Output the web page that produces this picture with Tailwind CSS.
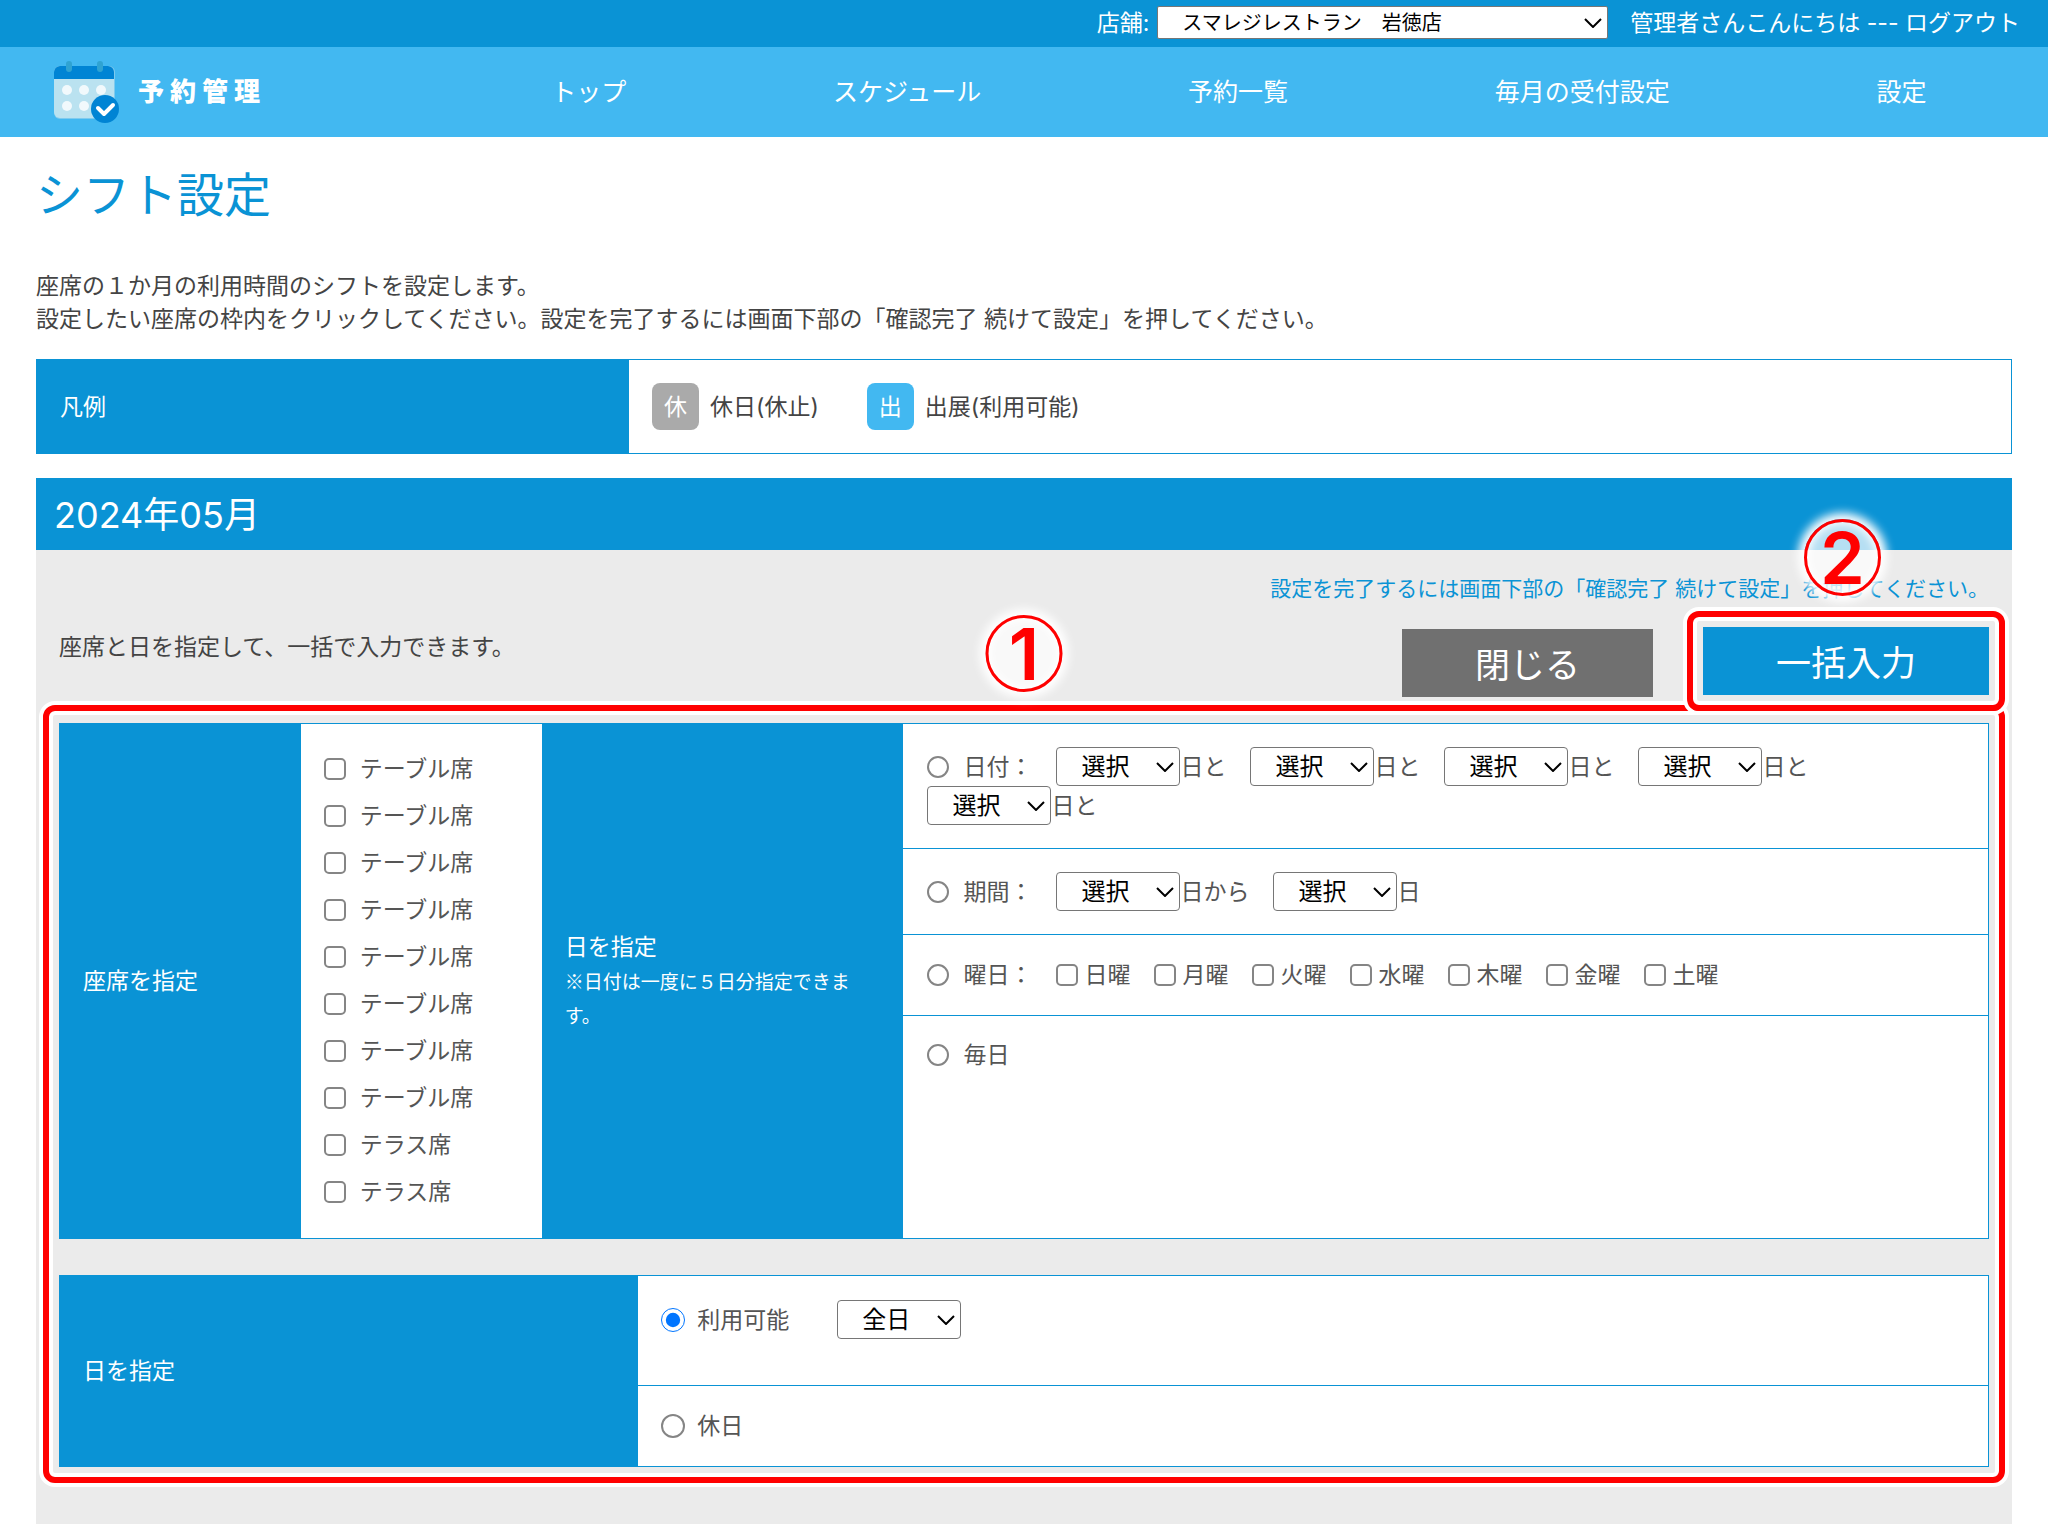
<!DOCTYPE html>
<html lang="ja">
  <head>
    <meta charset="UTF-8" />
    <title>シフト設定 | 予約管理</title>
    <meta name="viewport" content="width=device-width, initial-scale=1.0" />
    <script src="https://cdn.jsdelivr.net/npm/@tailwindcss/browser@4"></script>
  </head>
  <body
    class="flex min-h-screen flex-col bg-white font-['Inter','Noto_Sans_CJK_JP',sans-serif] text-[23px] leading-[34px] text-[#444]"
  >
    <svg class="hidden" xmlns="http://www.w3.org/2000/svg">
      <symbol id="chevron" viewBox="0 0 18 10">
        <path d="M1 1 9 9 17 1" fill="none" stroke="#000" stroke-width="2" />
      </symbol>
    </svg>

    <header class="text-white">
      <div class="flex h-[47px] items-center justify-end bg-[#0a93d5] pr-7 pb-0.5">
        <label for="shop">店舗:</label>
        <span class="relative mr-[22px] ml-2 flex items-center">
          <select
            id="shop"
            class="h-[33px] w-[451px] appearance-none rounded-xs border border-[#767676] bg-white px-6 text-xl leading-7 text-black"
          >
            <option>スマレジレストラン　岩徳店</option>
          </select>
          <svg class="pointer-events-none absolute right-1.5 h-2.5 w-[18px]"><use href="#chevron" /></svg>
        </span>
        <span>管理者さんこんにちは --- <a href="#logout">ログアウト</a></span>
      </div>
      <div class="flex h-[90px] items-center bg-[#42b8f1] pr-[18px]">
        <a href="#top" class="flex w-[448px] items-center gap-[18px] pl-[54px]">
          <svg class="h-[64px] w-[66px]" viewBox="0 0 66 64" xmlns="http://www.w3.org/2000/svg">
            <rect x="0" y="6" width="61" height="53" rx="6" fill="#7ecbef" />
            <rect x="0" y="6" width="60" height="52" rx="6" fill="#bae2f0" />
            <path d="M0 19v-7a6 6 0 0 1 6-6h48a6 6 0 0 1 6 6v7z" fill="#0084d4" />
            <rect x="12" y="1" width="6" height="11" rx="3" fill="#2fa3d2" />
            <rect x="43" y="1" width="6" height="11" rx="3" fill="#2fa3d2" />
            <g fill="#f1f9fc">
              <circle cx="13" cy="30" r="5" />
              <circle cx="30" cy="30" r="5" />
              <circle cx="47" cy="30" r="5" />
              <circle cx="13" cy="46" r="5" />
              <circle cx="30" cy="46" r="5" />
            </g>
            <circle cx="51" cy="49" r="14" fill="#0084d4" />
            <path
              d="m44 48 6 6 9-9"
              fill="none"
              stroke="#fff"
              stroke-width="4"
              stroke-linecap="round"
              stroke-linejoin="round"
            />
          </svg>
          <span class="text-[26px] font-black tracking-[6px]">予約管理</span>
        </a>
        <nav class="flex flex-1 justify-around text-[25px]">
          <a href="#top">トップ</a>
          <a href="#schedule">スケジュール</a>
          <a href="#list">予約一覧</a>
          <a href="#monthly">毎月の受付設定</a>
          <a href="#settings">設定</a>
        </nav>
      </div>
    </header>

    <main class="flex flex-1 flex-col px-9 pt-7">
      <h1 class="text-[47px] leading-[60px] text-[#0a93d5]">シフト設定</h1>
      <p class="mt-[45px] leading-[33px]">
        座席の１か月の利用時間のシフトを設定します。<br />
        設定したい座席の枠内をクリックしてください。設定を完了するには画面下部の「確認完了 続けて設定」を押してください。
      </p>

      <table class="mt-[23px] w-full border border-[#0a93d5]">
        <tbody>
          <tr>
            <th scope="row" class="w-[30%] bg-[#0a93d5] px-[23px] text-left font-normal text-white">凡例</th>
            <td class="px-[23px] py-[23px]">
              <div class="flex items-center">
                <span class="flex size-[47px] items-center justify-center rounded-lg bg-[#aaa] text-white">休</span>
                <span class="mr-12 ml-[11px]">休日(休止)</span>
                <span class="flex size-[47px] items-center justify-center rounded-lg bg-[#42b8f1] text-white">出</span>
                <span class="ml-[11px]">出展(利用可能)</span>
              </div>
            </td>
          </tr>
        </tbody>
      </table>

      <h2 class="mt-6 bg-[#0a93d5] px-[18px] pt-0.5 text-4xl leading-[70px] text-white">2024年05月</h2>

      <section class="relative flex-1 bg-[#ebebeb] px-[23px] pt-[22px] pb-14">
        <p class="text-right text-[21px] text-[#0a93d5]">
          設定を完了するには画面下部の「確認完了 続けて設定」を押してください。
        </p>

        <div class="mt-[21px] flex h-[70px]">
          <p class="flex-1 leading-10">座席と日を指定して、一括で入力できます。</p>
          <button type="button" class="mr-[50px] h-[68px] self-end bg-[#707070] px-[73px] pt-1 text-[35px] text-white">
            閉じる
          </button>
          <div class="relative z-10 h-[68px]">
            <button type="button" class="h-full bg-[#0a93d5] px-[73px] pt-1 text-[35px] text-white">一括入力</button>
            <div
              class="pointer-events-none absolute -inset-4 rounded-xl border-6 border-[#f00] shadow-[0_0_0_4px_#fff,inset_0_0_0_4px_#fff]"
            ></div>
            <!-- step 2 -->
            <span
              class="pointer-events-none absolute -top-[108px] right-27 flex size-[77px] items-center justify-center rounded-full border-3 border-[#f00] bg-white/70 text-[72px] leading-none font-semibold text-[#f00] shadow-[0_0_10px_6px_#fff,inset_0_0_8px_2px_#fff]"
              >2</span
            >
          </div>
        </div>

        <div class="relative mt-[26px] text-[#555]">
          <table class="w-full table-fixed border border-[#0a93d5] bg-white">
            <tbody>
              <tr>
                <th scope="row" class="w-1/8 bg-[#0a93d5] px-[23px] text-left font-normal text-white">座席を指定</th>
                <td class="w-1/8 px-[23px] pt-[21px] pb-[23px]">
                  <label class="flex h-[47px] items-center gap-3.5"><input type="checkbox" class="size-[22px] appearance-none rounded-[5px] border-2 border-[#858585] checked:appearance-auto" />テーブル席</label>
                  <label class="flex h-[47px] items-center gap-3.5"><input type="checkbox" class="size-[22px] appearance-none rounded-[5px] border-2 border-[#858585] checked:appearance-auto" />テーブル席</label>
                  <label class="flex h-[47px] items-center gap-3.5"><input type="checkbox" class="size-[22px] appearance-none rounded-[5px] border-2 border-[#858585] checked:appearance-auto" />テーブル席</label>
                  <label class="flex h-[47px] items-center gap-3.5"><input type="checkbox" class="size-[22px] appearance-none rounded-[5px] border-2 border-[#858585] checked:appearance-auto" />テーブル席</label>
                  <label class="flex h-[47px] items-center gap-3.5"><input type="checkbox" class="size-[22px] appearance-none rounded-[5px] border-2 border-[#858585] checked:appearance-auto" />テーブル席</label>
                  <label class="flex h-[47px] items-center gap-3.5"><input type="checkbox" class="size-[22px] appearance-none rounded-[5px] border-2 border-[#858585] checked:appearance-auto" />テーブル席</label>
                  <label class="flex h-[47px] items-center gap-3.5"><input type="checkbox" class="size-[22px] appearance-none rounded-[5px] border-2 border-[#858585] checked:appearance-auto" />テーブル席</label>
                  <label class="flex h-[47px] items-center gap-3.5"><input type="checkbox" class="size-[22px] appearance-none rounded-[5px] border-2 border-[#858585] checked:appearance-auto" />テーブル席</label>
                  <label class="flex h-[47px] items-center gap-3.5"><input type="checkbox" class="size-[22px] appearance-none rounded-[5px] border-2 border-[#858585] checked:appearance-auto" />テラス席</label>
                  <label class="flex h-[47px] items-center gap-3.5"><input type="checkbox" class="size-[22px] appearance-none rounded-[5px] border-2 border-[#858585] checked:appearance-auto" />テラス席</label>
                </td>
                <th scope="row" class="w-3/16 bg-[#0a93d5] px-[23px] text-left font-normal text-white">
                  日を指定<br />
                  <span class="font-['Noto_Sans_CJK_JP',sans-serif] text-[19px]">※日付は一度に５日分指定できます。</span>
                </th>
                <td class="align-top">
                  <!-- 日付 -->
                  <div class="flex flex-wrap items-center gap-x-6 border-b border-[#0a93d5] px-6 py-[23px]">
                    <label class="flex items-center gap-3.5"><input type="radio" name="day" class="size-[22px] appearance-none rounded-full border-2 border-[#858585] checked:appearance-auto" />日付：</label>
                    <label class="flex items-center">
                      <span class="relative flex items-center">
                        <select class="h-[39px] w-[124px] appearance-none rounded-sm border border-[#767676] bg-white pl-6 text-2xl text-black"><option>選択</option></select>
                        <svg class="pointer-events-none absolute right-1.5 h-2.5 w-[18px]"><use href="#chevron" /></svg>
                      </span>
                      日と
                    </label>
                    <label class="flex items-center">
                      <span class="relative flex items-center">
                        <select class="h-[39px] w-[124px] appearance-none rounded-sm border border-[#767676] bg-white pl-6 text-2xl text-black"><option>選択</option></select>
                        <svg class="pointer-events-none absolute right-1.5 h-2.5 w-[18px]"><use href="#chevron" /></svg>
                      </span>
                      日と
                    </label>
                    <label class="flex items-center">
                      <span class="relative flex items-center">
                        <select class="h-[39px] w-[124px] appearance-none rounded-sm border border-[#767676] bg-white pl-6 text-2xl text-black"><option>選択</option></select>
                        <svg class="pointer-events-none absolute right-1.5 h-2.5 w-[18px]"><use href="#chevron" /></svg>
                      </span>
                      日と
                    </label>
                    <label class="flex items-center">
                      <span class="relative flex items-center">
                        <select class="h-[39px] w-[124px] appearance-none rounded-sm border border-[#767676] bg-white pl-6 text-2xl text-black"><option>選択</option></select>
                        <svg class="pointer-events-none absolute right-1.5 h-2.5 w-[18px]"><use href="#chevron" /></svg>
                      </span>
                      日と
                    </label>
                    <label class="flex items-center">
                      <span class="relative flex items-center">
                        <select class="h-[39px] w-[124px] appearance-none rounded-sm border border-[#767676] bg-white pl-6 text-2xl text-black"><option>選択</option></select>
                        <svg class="pointer-events-none absolute right-1.5 h-2.5 w-[18px]"><use href="#chevron" /></svg>
                      </span>
                      日と
                    </label>
                  </div>
                  <!-- 期間 -->
                  <div class="flex flex-wrap items-center gap-x-6 border-b border-[#0a93d5] px-6 py-[23px]">
                    <label class="flex items-center gap-3.5"><input type="radio" name="day" class="size-[22px] appearance-none rounded-full border-2 border-[#858585] checked:appearance-auto" />期間：</label>
                    <label class="flex items-center">
                      <span class="relative flex items-center">
                        <select class="h-[39px] w-[124px] appearance-none rounded-sm border border-[#767676] bg-white pl-6 text-2xl text-black"><option>選択</option></select>
                        <svg class="pointer-events-none absolute right-1.5 h-2.5 w-[18px]"><use href="#chevron" /></svg>
                      </span>
                      日から
                    </label>
                    <label class="flex items-center">
                      <span class="relative flex items-center">
                        <select class="h-[39px] w-[124px] appearance-none rounded-sm border border-[#767676] bg-white pl-6 text-2xl text-black"><option>選択</option></select>
                        <svg class="pointer-events-none absolute right-1.5 h-2.5 w-[18px]"><use href="#chevron" /></svg>
                      </span>
                      日
                    </label>
                  </div>
                  <!-- 曜日 -->
                  <div class="flex flex-wrap items-center gap-x-6 border-b border-[#0a93d5] px-6 py-[23px]">
                    <label class="flex items-center gap-3.5"><input type="radio" name="day" class="size-[22px] appearance-none rounded-full border-2 border-[#858585] checked:appearance-auto" />曜日：</label>
                    <label class="flex items-center gap-1.5"><input type="checkbox" class="size-[22px] appearance-none rounded-[5px] border-2 border-[#858585] checked:appearance-auto" />日曜</label>
                    <label class="flex items-center gap-1.5"><input type="checkbox" class="size-[22px] appearance-none rounded-[5px] border-2 border-[#858585] checked:appearance-auto" />月曜</label>
                    <label class="flex items-center gap-1.5"><input type="checkbox" class="size-[22px] appearance-none rounded-[5px] border-2 border-[#858585] checked:appearance-auto" />火曜</label>
                    <label class="flex items-center gap-1.5"><input type="checkbox" class="size-[22px] appearance-none rounded-[5px] border-2 border-[#858585] checked:appearance-auto" />水曜</label>
                    <label class="flex items-center gap-1.5"><input type="checkbox" class="size-[22px] appearance-none rounded-[5px] border-2 border-[#858585] checked:appearance-auto" />木曜</label>
                    <label class="flex items-center gap-1.5"><input type="checkbox" class="size-[22px] appearance-none rounded-[5px] border-2 border-[#858585] checked:appearance-auto" />金曜</label>
                    <label class="flex items-center gap-1.5"><input type="checkbox" class="size-[22px] appearance-none rounded-[5px] border-2 border-[#858585] checked:appearance-auto" />土曜</label>
                  </div>
                  <!-- 毎日 -->
                  <div class="flex px-6 py-[22px]">
                    <label class="flex items-center gap-3.5"><input type="radio" name="day" class="size-[22px] appearance-none rounded-full border-2 border-[#858585] checked:appearance-auto" />毎日</label>
                  </div>
                </td>
              </tr>
            </tbody>
          </table>

          <table class="mt-9 w-full table-fixed border border-[#0a93d5] bg-white">
            <tbody>
              <tr>
                <th scope="row" rowspan="2" class="w-[30%] bg-[#0a93d5] px-[23px] text-left font-normal text-white">日を指定</th>
                <td class="border-b border-[#0a93d5] px-[23px] pt-6 pb-[46px]">
                  <div class="flex items-center">
                    <label class="mr-12 flex items-center gap-3"><input type="radio" name="status" class="size-6 appearance-none rounded-full border-2 border-[#858585] accent-[#0075ff] checked:appearance-auto" checked />利用可能</label>
                    <span class="relative flex items-center">
                      <select aria-label="時間帯" class="h-[39px] w-[124px] appearance-none rounded-sm border border-[#767676] bg-white pl-6 text-2xl text-black"><option>全日</option></select>
                      <svg class="pointer-events-none absolute right-1.5 h-2.5 w-[18px]"><use href="#chevron" /></svg>
                    </span>
                  </div>
                </td>
              </tr>
              <tr>
                <td class="px-[23px] py-[23px]">
                  <div class="flex">
                    <label class="flex items-center gap-3"><input type="radio" name="status" class="size-6 appearance-none rounded-full border-2 border-[#858585] accent-[#0075ff] checked:appearance-auto" />休日</label>
                  </div>
                </td>
              </tr>
            </tbody>
          </table>

          <div
            class="pointer-events-none absolute -inset-x-4 -top-[18px] -bottom-4 rounded-xl border-6 border-[#f00] shadow-[0_0_0_4px_#fff,inset_0_0_0_4px_#fff]"
          ></div>
          <!-- step 1 -->
          <span
            class="pointer-events-none absolute -top-[108px] left-1/2 flex size-[77px] -translate-x-1/2 items-center justify-center rounded-full border-3 border-[#f00] bg-white/70 text-[72px] leading-none font-semibold text-[#f00] shadow-[0_0_10px_6px_#fff,inset_0_0_8px_2px_#fff]"
            >1</span
          >
        </div>
      </section>
    </main>
  </body>
</html>
